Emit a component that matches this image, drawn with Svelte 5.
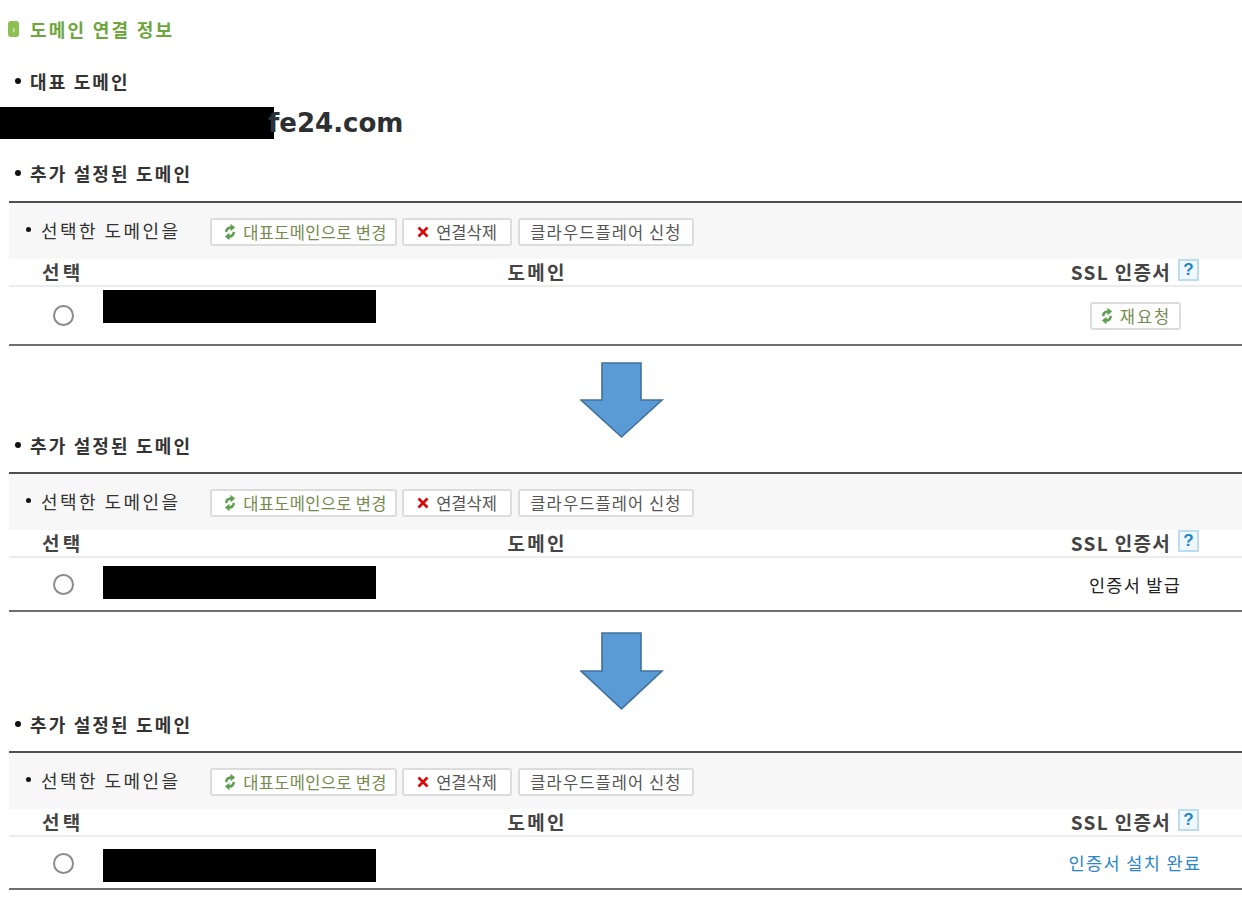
<script>
  const panels = [
    { rowClass: 'r1', kind: 'btn' },
    { rowClass: 'r2', kind: 'issued' },
    { rowClass: 'r3', kind: 'done' }
  ];
</script>

{#snippet refresh()}
  <svg class="ico" width="12" height="18" viewBox="0 0 12 18" aria-hidden="true">
    <path d="M6.5 0.8 L11.2 4.6 L6.5 8.2 L6.5 6 A3.2 3.4 0 0 0 3.4 9.4 L1 8.8 A5.4 5.6 0 0 1 6.5 3.2 Z" fill="#5f9f50"/>
    <path d="M5.5 17.2 L0.8 13.4 L5.5 9.8 L5.5 12 A3.2 3.4 0 0 0 8.6 8.6 L11 9.2 A5.4 5.6 0 0 1 5.5 14.8 Z" fill="#5f9f50"/>
  </svg>
{/snippet}

{#snippet toolbar()}
  <div class="toolbar">
    <span class="bul tb-label">선택한 도메인을</span>
    <span class="btn b-main">{@render refresh()}<span class="olive">대표도메인으로 변경</span></span>
    <span class="btn b-del">
      <svg class="ico" width="12" height="12" viewBox="0 0 12 12" aria-hidden="true">
        <path d="M1.5 1.5 L10.5 10.5 M10.5 1.5 L1.5 10.5" stroke="#d40c0c" stroke-width="2.8" fill="none"/>
      </svg>
      <span>연결삭제</span>
    </span>
    <span class="btn b-cf"><span>클라우드플레어 신청</span></span>
  </div>
{/snippet}

<main class="page">
  <h1 class="title"><span class="tag"><span class="chev">›</span></span>도메인 연결 정보</h1>
  <h2 class="bul sub first">대표 도메인</h2>
  <div class="domain"><span class="mask"></span><span class="dtext">fe24.com</span></div>

  {#each panels as p, i}
    <h2 class="bul sub" class:s1={i === 0}>추가 설정된 도메인</h2>
    <section class="panel">
      {@render toolbar()}
      <div class="head">
        <span class="c-sel">선택</span>
        <span class="c-dom">도메인</span>
        <span class="c-ssl">SSL 인증서<span class="help">?</span></span>
      </div>
      <div class="row {p.rowClass}">
        <span class="radio"></span>
        <span class="rmask"></span>
        <span class="status">
          {#if p.kind === 'btn'}
            <span class="btn b-re">{@render refresh()}<span class="olive">재요청</span></span>
          {:else if p.kind === 'issued'}
            <span class="issued">인증서 발급</span>
          {:else}
            <span class="done">인증서 설치 완료</span>
          {/if}
        </span>
      </div>
    </section>
    {#if i < 2}
      <div class="arrow" class:a2={i === 1}>
        <svg width="85" height={i === 1 ? 79 : 77} viewBox="0 0 85 77" preserveAspectRatio="none" aria-hidden="true">
          <path d="M22 1 H61 V38 H82 L41.5 75 L1 38 H22 Z" fill="#5b9bd5" stroke="#41719c" stroke-width="1.6"/>
        </svg>
      </div>
    {/if}
  {/each}
</main>

<style>
  :global(body) { margin: 0; background: #fff; }
  .page {
    width: 1242px;
    height: 904px;
    overflow: hidden;
    font-family: "Noto Sans CJK KR", "Noto Sans", sans-serif;
    color: #333;
  }
  .title {
    margin: 0;
    padding: 16px 0 0 8px;
    height: 26px;
    display: flex;
    align-items: center;
    font-size: 18px;
    line-height: 26px;
    font-weight: 700;
    letter-spacing: 2.25px;
    color: #6ca63c;
  }
  .tag {
    width: 11px;
    height: 16px;
    margin-right: 11px;
    border-radius: 3px;
    background: #8cc152;
    display: inline-flex;
    align-items: center;
    justify-content: center;
  }
  .chev { color: #eef6df; font-size: 10px; line-height: 10px; letter-spacing: 0; }
  .sub {
    margin: 0;
    padding-left: 30px;
    height: 18px;
    font-size: 18px;
    line-height: 18px;
    font-weight: 700;
    letter-spacing: 2.15px;
    color: #333;
    position: relative;
  }
  .bul::before {
    content: "";
    position: absolute;
    left: 15px;
    top: 6px;
    width: 6px;
    height: 6px;
    border-radius: 50%;
    background: #111;
  }
  .first { margin-top: 30px; }
  .s1 { margin-top: 25px; height: 19px; }
  .domain {
    height: 32px;
    margin-top: 17px;
    display: flex;
    align-items: center;
  }
  .mask { width: 274px; height: 32px; background: #000; flex: none; }
  .dtext {
    margin-left: -6px;
    position: relative;
    font-family: "DejaVu Sans", sans-serif;
    font-weight: 700;
    font-size: 26px;
    line-height: 32px;
    color: #2d3033;
  }
  .panel {
    margin-left: 9px;
    margin-top: 18px;
    border-top: 2px solid #505050;
    border-bottom: 2px solid #6e6e6e;
  }
  .toolbar {
    height: 56px;
    background: #f7f7f7;
    display: flex;
    align-items: center;
    position: relative;
    padding-left: 201px;
    gap: 5px;
  }
  .tb-label {
    position: absolute;
    left: 32px;
    top: 12px;
    font-size: 18px;
    line-height: 30px;
    letter-spacing: 2.45px;
    color: #333;
  }
  .tb-label::before { left: -15px; top: 12px; width: 5px; height: 5px; }
  .btn {
    height: 28px;
    box-sizing: border-box;
    border: 2px solid #dcdcdc;
    border-radius: 3px;
    background: #fff;
    display: inline-flex;
    align-items: center;
    justify-content: center;
    font-size: 16.5px;
    color: #555;
    white-space: nowrap;
    margin-top: 2px;
  }
  .b-main { width: 187px; gap: 7px; padding-left: 4px; }
  .b-main .olive { letter-spacing: 0.3px; }
  .b-del { width: 110px; gap: 7px; }
  .b-cf { width: 176px; margin-left: 1px; letter-spacing: 1.1px; }
  .olive { color: #76894e; }
  .ico { flex: none; }
  .head {
    height: 25px;
    padding-bottom: 1px;
    border-bottom: 2px solid #ececec;
    display: flex;
    align-items: center;
    font-size: 19px;
    font-weight: 700;
    letter-spacing: 2.3px;
    color: #444;
  }
  .c-sel { margin-left: 33px; letter-spacing: 3.2px; }
  .c-dom { margin-left: 424px; }
  .c-ssl {
    margin-left: auto;
    margin-right: 43px;
    display: inline-flex;
    align-items: center;
    letter-spacing: 1.3px;
  }
  .help {
    width: 21px;
    height: 22px;
    margin-left: 7px;
    margin-top: -3px;
    box-sizing: border-box;
    border: 2px solid #bcdcf2;
    background: #f0f8fd;
    color: #1a86c6;
    font: 700 17px/18px "Liberation Sans", sans-serif;
    text-align: center;
    letter-spacing: 0;
  }
  .row { display: flex; align-items: center; }
  .r1 { height: 57px; }
  .r2 { height: 52px; }
  .r3 { height: 51px; }
  .radio {
    width: 21px;
    height: 21px;
    box-sizing: border-box;
    margin-left: 44px;
    border: 2px solid #8a8a8a;
    border-radius: 50%;
    background: #fff;
    flex: none;
  }
  .r3 .radio { margin-top: 1px; }
  .rmask {
    width: 273px;
    height: 33px;
    margin-left: 29px;
    background: #000;
    flex: none;
    align-self: flex-start;
    margin-top: 3px;
  }
  .r2 .rmask { margin-top: 8px; }
  .r3 .rmask { margin-top: 12px; }
  .status { margin-left: auto; width: 214px; display: flex; justify-content: center; font-size: 17.5px; }
  .b-re { width: 91px; gap: 7px; margin-top: 1px; letter-spacing: 2px; padding-left: 2px; }
  .issued { color: #222; letter-spacing: 1.3px; }
  .done { color: #2a86c9; letter-spacing: 1.4px; }
  .arrow { height: 74px; margin-left: 580px; margin-top: 16px; }
  .a2 { height: 83px; margin-top: 20px; }
</style>
